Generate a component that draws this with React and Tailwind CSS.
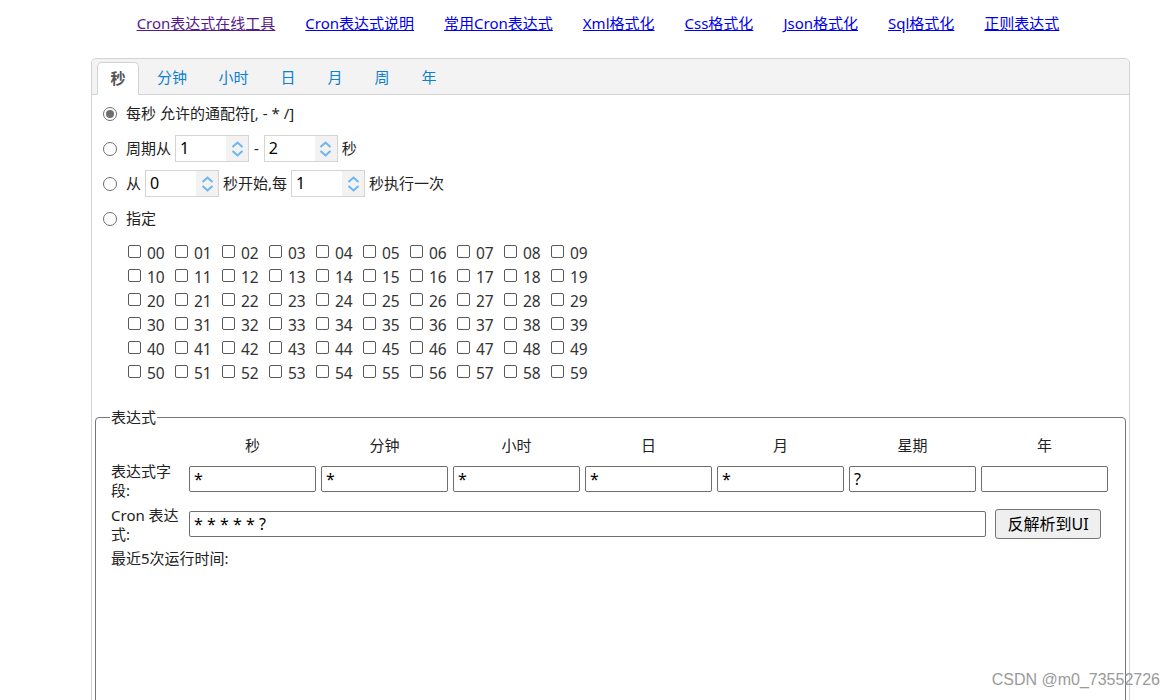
import React from "react";

const FONT = "font-['Noto_Sans','Noto_Sans_CJK_SC',sans-serif]";

const LINKS = [
  { label: "Cron表达式在线工具", visited: true },
  { label: "Cron表达式说明" },
  { label: "常用Cron表达式" },
  { label: "Xml格式化" },
  { label: "Css格式化" },
  { label: "Json格式化" },
  { label: "Sql格式化" },
  { label: "正则表达式" },
];

const TABS = [
  { label: "秒", w: "w-[42px]" },
  { label: "分钟", w: "w-[56px]" },
  { label: "小时", w: "w-[57px]" },
  { label: "日", w: "w-[42px]" },
  { label: "月", w: "w-[42px]" },
  { label: "周", w: "w-[42px]" },
  { label: "年", w: "w-[42px]" },
];

const FIELDS = [
  { head: "秒", value: "*" },
  { head: "分钟", value: "*" },
  { head: "小时", value: "*" },
  { head: "日", value: "*" },
  { head: "月", value: "*" },
  { head: "星期", value: "?" },
  { head: "年", value: "" },
];

function Radio({ checked }) {
  return (
    <span className="w-[14px] h-[14px] rounded-full border border-[#6e6e6e] bg-white flex items-center justify-center shrink-0">
      {checked && <span className="w-[8px] h-[8px] rounded-full bg-[#6e6e6e]" />}
    </span>
  );
}

function Spinner({ value }) {
  return (
    <div className="w-[74px] h-[27px] border border-[#d4d4d4] bg-white flex">
      <div className="flex-1 pl-[4px] text-[16px] leading-[25px] text-black">{value}</div>
      <div className="w-[22px] bg-[#f2f2f2] flex flex-col items-center justify-center gap-[2px]">
        <svg width="13" height="7" viewBox="0 0 13 7">
          <path d="M1.5 6 L6.5 1.5 L11.5 6" fill="none" stroke="#6db5ee" strokeWidth="2" />
        </svg>
        <svg width="13" height="7" viewBox="0 0 13 7">
          <path d="M1.5 1 L6.5 5.5 L11.5 1" fill="none" stroke="#6db5ee" strokeWidth="2" />
        </svg>
      </div>
    </div>
  );
}

function Row({ checked, children }) {
  return (
    <div className="h-[35px] flex items-center">
      <Radio checked={checked} />
      <div className="ml-[9px] flex items-center gap-[4px]">{children}</div>
    </div>
  );
}

export default function App() {
  const nums = Array.from({ length: 60 }, (_, i) => String(i).padStart(2, "0"));

  return (
    <div className={`${FONT} relative w-[1176px] h-[700px] overflow-hidden bg-white text-[15px] text-[#222]`}>
      <nav className="h-[58px] flex justify-center gap-[30px] pl-[20px] pt-[12px]">
        {LINKS.map((l) => (
          <a
            key={l.label}
            href="#"
            className={`underline leading-[22px] ${l.visited ? "text-[#551a8b]" : "text-[#0000ee]"}`}
          >
            {l.label}
          </a>
        ))}
      </nav>

      <div className="ml-[91px] w-[1039px] h-[700px] border border-[#d3d3d3] rounded-t-[5px]">
        <div className="h-[36px] bg-[#f3f3f3] border-b border-[#d3d3d3] flex items-end pl-[5px] gap-[5px] rounded-t-[5px]">
          {TABS.map((t, i) =>
            i === 0 ? (
              <div
                key={t.label}
                className={`${t.w} h-[33px] -mb-px bg-white border border-[#d3d3d3] border-b-white rounded-t-[5px] flex items-center justify-center font-semibold text-[#555]`}
              >
                {t.label}
              </div>
            ) : (
              <div key={t.label} className={`${t.w} h-[33px] flex items-center justify-center text-[#0e80d0]`}>
                {t.label}
              </div>
            )
          )}
        </div>

        <div className="pt-[1px] pl-[11px]">
          <Row checked>
            <span>每秒 允许的通配符[, - * /]</span>
          </Row>
          <Row>
            <span>周期从</span>
            <Spinner value="1" />
            <span className="mx-[1px]">-</span>
            <Spinner value="2" />
            <span>秒</span>
          </Row>
          <Row>
            <span>从</span>
            <Spinner value="0" />
            <span>秒开始,每</span>
            <Spinner value="1" />
            <span>秒执行一次</span>
          </Row>
          <Row>
            <span>指定</span>
          </Row>
        </div>

        <div className="mt-[3px] pl-[36px] grid grid-cols-[repeat(10,47px)]">
          {nums.map((n) => (
            <div key={n} className="h-[24px] flex items-center">
              <span className="w-[13px] h-[13px] border border-[#5a5a5a] rounded-[2px] bg-white shrink-0" />
              <span className="ml-[6px] text-[15.5px] leading-[24px] mt-[3px] text-[#333]">{n}</span>
            </div>
          ))}
        </div>

        <fieldset className="mt-[24px] mx-[3px] min-h-[320px] border border-[#767676] rounded-[4px] px-[15px]">
          <legend className="-ml-[1px] px-[1px] leading-[20px] text-[15px]">表达式</legend>

          <div className="mt-[7px] grid grid-cols-[73px_repeat(7,127px)] gap-x-[5px] items-start">
            <div className="h-[22px]" />
            {FIELDS.map((f) => (
              <div key={f.head} className="h-[22px] leading-[22px] text-center">
                {f.head}
              </div>
            ))}

            <div className="mt-[6px] leading-[19px]">表达式字段:</div>
            {FIELDS.map((f) => (
              <div
                key={f.head + "-in"}
                className="mt-[10px] h-[26px] border border-[#6e6e6e] rounded-[2px] pl-[4px] text-[16px] leading-[24px] text-black"
              >
                {f.value}
              </div>
            ))}
          </div>

          <div className="mt-[11px] flex items-start">
            <div className="w-[73px] leading-[19px] -mt-[5px]">Cron 表达式:</div>
            <div className="ml-[5px] w-[797px] h-[26px] border border-[#6e6e6e] rounded-[2px] pl-[4px] text-[16px] leading-[24px] text-black">
              * * * * * ?
            </div>
            <button className="ml-[9px] -mt-[2px] w-[106px] h-[30px] bg-[#efefef] border border-[#767676] rounded-[3px] text-[16px] text-black">
              反解析到UI
            </button>
          </div>

          <div className="mt-[4px] leading-[20px]">最近5次运行时间:</div>
        </fieldset>
      </div>

      <div className="absolute right-[16px] bottom-[8px] font-['Liberation_Sans',sans-serif] text-[16px] text-[#9a9a9a]">
        CSDN @m0_73552726
      </div>
    </div>
  );
}
